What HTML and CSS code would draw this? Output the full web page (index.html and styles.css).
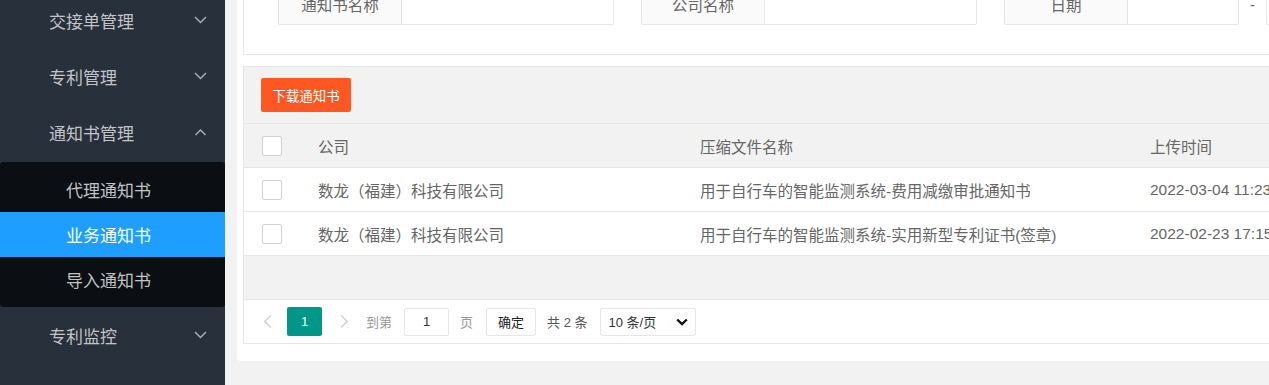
FILE: index.html
```html
<!DOCTYPE html>
<html lang="zh-CN">
<head>
<meta charset="utf-8">
<title>业务通知书</title>
<link rel="stylesheet" href="styles.css">
</head>
<body>
<div class="app">
  <aside class="side">
    <ul class="nav">
      <li class="nav-item"><span>交接单管理</span><svg class="chev" width="13" height="8" viewBox="0 0 13 8"><path d="M1 1l5.5 5.5L12 1"/></svg></li>
      <li class="nav-item"><span>专利管理</span><svg class="chev" width="13" height="8" viewBox="0 0 13 8"><path d="M1 1l5.5 5.5L12 1"/></svg></li>
      <li class="nav-item"><span>通知书管理</span><svg class="chev" width="13" height="8" viewBox="0 0 13 8"><path d="M1.5 7l5-5 5 5"/></svg></li>
      <li class="nav-child">
        <a class="sub">代理通知书</a>
        <a class="sub active">业务通知书</a>
        <a class="sub">导入通知书</a>
      </li>
      <li class="nav-item"><span>专利监控</span><svg class="chev" width="13" height="8" viewBox="0 0 13 8"><path d="M1 1l5.5 5.5L12 1"/></svg></li>
    </ul>
  </aside>
  <main class="main">
    <div class="card">
      <div class="search">
        <div class="field"><label class="flabel">通知书名称</label><div class="finput"></div></div>
        <div class="field"><label class="flabel">公司名称</label><div class="finput"></div></div>
        <div class="field last"><label class="flabel">日期</label><div class="finput short"></div></div>
        <span class="dash">-</span>
        <div class="finput short alone"></div>
      </div>
      <div class="table">
        <div class="toolbar"><button class="btn">下载通知书</button></div>
        <div class="row head">
          <div class="c1"><span class="cbox"></span></div>
          <div class="c2">公司</div>
          <div class="c3">压缩文件名称</div>
          <div class="c4">上传时间</div>
        </div>
        <div class="row">
          <div class="c1"><span class="cbox"></span></div>
          <div class="c2">数龙（福建）科技有限公司</div>
          <div class="c3">用于自行车的智能监测系统-费用减缴审批通知书</div>
          <div class="c4">2022-03-04 11:23:45</div>
        </div>
        <div class="row">
          <div class="c1"><span class="cbox"></span></div>
          <div class="c2">数龙（福建）科技有限公司</div>
          <div class="c3">用于自行车的智能监测系统-实用新型专利证书(签章)</div>
          <div class="c4">2022-02-23 17:15:32</div>
        </div>
        <div class="empty"></div>
        <div class="pager">
          <span class="parrow prev"><svg width="9" height="13" viewBox="0 0 9 13"><path d="M8 0.5L1.8 6.5 8 12.5"/></svg></span>
          <span class="curr">1</span>
          <span class="parrow next"><svg width="9" height="13" viewBox="0 0 9 13"><path d="M1 0.5L7.2 6.5 1 12.5"/></svg></span>
          <span class="ptext goto">到第</span>
          <span class="pinput">1</span>
          <span class="ptext page">页</span>
          <button class="pbtn">确定</button>
          <span class="count">共 2 条</span>
          <span class="psel"><span>10 条/页</span><svg width="12" height="8" viewBox="0 0 12 8"><path d="M1.2 1.5l4.8 4.6 4.8-4.6"/></svg></span>
        </div>
      </div>
    </div>
  </main>
</div>
</body>
</html>
```
FILE: styles.css
```css
* { box-sizing: border-box; }
html, body { margin: 0; padding: 0; }
body {
  width: 1269px;
  height: 385px;
  overflow: hidden;
  background: #f2f2f2;
  font-family: "Liberation Sans", "Noto Sans CJK SC", sans-serif;
}
.app {
  display: flex;
  align-items: flex-start;
  margin-top: -60px;
  width: max-content;
}
.side {
  flex: none;
  width: 225px;
  height: 460px;
  background: #28303b;
}
.nav {
  list-style: none;
  margin: 0;
  padding: 52px 0 0;
}
.nav-item {
  height: 56px;
  display: flex;
  align-items: center;
  justify-content: space-between;
  padding: 0 18px 0 49px;
  font-size: 17px;
  color: rgba(255, 255, 255, 0.72);
}
.chev path { fill: none; stroke: #a9adb3; stroke-width: 1.5; }
.nav-child {
  margin-top: 2px;
  background: #0b0f14;
  padding: 5px 0;
  border-radius: 3px;
}
.sub {
  display: flex;
  align-items: center;
  height: 45px;
  padding-left: 66px;
  font-size: 17px;
  color: rgba(255, 255, 255, 0.75);
}
.sub.active { background: #1e9fff; color: #fff; }
.main {
  flex: none;
  width: 1280px;
  padding: 12px 0 0 12px;
}
.card {
  background: #fff;
  padding: 6px 6px 17px;
  border-radius: 4px;
}
.search {
  display: flex;
  align-items: center;
  border: 1px solid #e6e6e6;
  padding: 24px 0 29px 34px;
}
.field {
  display: flex;
  height: 42px;
  margin-right: 27px;
}
.field.last { margin-right: 0; }
.flabel {
  width: 124px;
  height: 42px;
  border: 1px solid #e6e6e6;
  border-radius: 2px 0 0 2px;
  background: #fafafa;
  display: flex;
  align-items: center;
  justify-content: center;
  font-size: 15.5px;
  color: #666;
}
.finput {
  width: 212px;
  height: 42px;
  border: 1px solid #e6e6e6;
  border-left: 0;
  border-radius: 0 2px 2px 0;
  background: #fff;
}
.finput.short { width: 111px; }
.finput.alone { border-left: 1px solid #e6e6e6; border-radius: 2px; }
.dash {
  width: 27px;
  text-align: center;
  font-size: 15px;
  color: #666;
}
.table {
  margin-top: 11px;
  border: 1px solid #e6e6e6;
  font-size: 15.5px;
  color: #666;
}
.toolbar {
  height: 57px;
  padding: 11px 17px;
  background: #f2f2f2;
  border-bottom: 1px solid #e6e6e6;
}
.btn {
  display: block;
  width: 90px;
  height: 34px;
  padding: 0;
  border: 0;
  border-radius: 2px;
  background: #ff5722;
  color: #fff;
  font-family: inherit;
  font-size: 13.5px;
}
.row {
  display: flex;
  align-items: center;
  height: 44px;
  border-bottom: 1px solid #e6e6e6;
  white-space: nowrap;
}
.row.head { background: #f2f2f2; }
.c1 { flex: none; width: 59px; padding-left: 18px; display: flex; }
.c2 { flex: none; width: 382px; padding-left: 15px; }
.c3 { flex: none; width: 450px; padding-left: 15px; }
.c4 { flex: none; padding-left: 15px; }
.cbox {
  width: 20px;
  height: 20px;
  border: 1px solid #d2d2d2;
  border-radius: 2px;
  background: #fff;
}
.empty {
  height: 44px;
  background: #f2f2f2;
  border-bottom: 1px solid #e6e6e6;
}
.pager {
  display: flex;
  align-items: center;
  height: 43px;
  padding-left: 17px;
  font-size: 13px;
  color: #999;
  white-space: nowrap;
}
.parrow { display: flex; width: 12px; justify-content: center; }
.parrow path { fill: none; stroke: #d2d2d2; stroke-width: 1.5; }
.curr {
  margin-left: 14px;
  width: 35px;
  height: 29px;
  border-radius: 2px;
  background: #009688;
  color: #fff;
  display: flex;
  align-items: center;
  justify-content: center;
}
.next { margin-left: 16px; }
.goto { margin-left: 16px; }
.pinput {
  margin-left: 12px;
  width: 45px;
  height: 28px;
  border: 1px solid #e6e6e6;
  border-radius: 2px;
  color: #333;
  display: flex;
  align-items: center;
  justify-content: center;
}
.page { margin-left: 11px; }
.pbtn {
  margin-left: 13px;
  width: 50px;
  height: 28px;
  padding: 0;
  border: 1px solid #e6e6e6;
  border-radius: 2px;
  background: #fff;
  color: #222;
  font-family: inherit;
  font-size: 13px;
}
.count { margin-left: 11px; color: #555; }
.psel {
  margin-left: 12px;
  width: 96px;
  height: 28px;
  border: 1px solid #e6e6e6;
  border-radius: 2px;
  padding: 0 7px 0 8px;
  display: flex;
  align-items: center;
  justify-content: space-between;
  color: #333;
}
.psel path { fill: none; stroke: #111; stroke-width: 2.4; }
```
